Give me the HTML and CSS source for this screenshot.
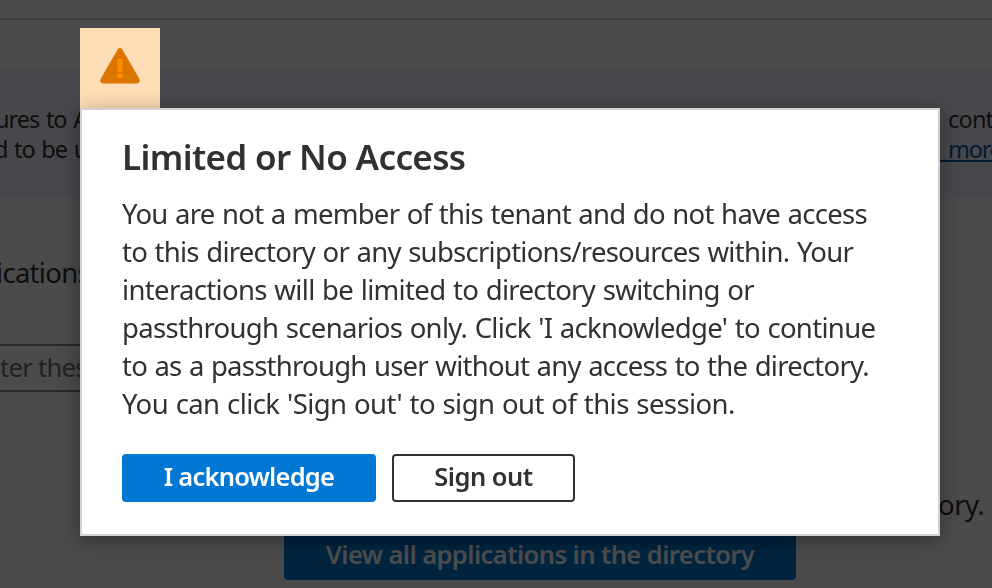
FILE: index.html
```html
<!DOCTYPE html>
<html lang="en">
<head>
  <meta charset="UTF-8" />
  <meta name="viewport" content="width=device-width, initial-scale=1.0" />
  <title>Limited or No Access</title>
  <link rel="stylesheet" href="styles.css">
</head>
<body>
  <main class="page">
    <div class="toolbar"></div>
    <section class="banner">
      <div class="banner-row"><span class="row-start">ures to A</span><span class="row-end">cont</span></div>
      <div class="banner-row"><span class="row-start need">d to be u</span><a class="row-end link">more</a></div>
    </section>
    <h2 class="section-title">ications</h2>
    <div class="search">ter thes</div>
    <p class="empty">ory.</p>
    <button class="view-all">View all applications in the directory</button>
  </main>

  <div class="overlay"></div>

  <div class="dialog-wrap">
    <div class="dialog-icon">
      <svg width="40" height="36" viewBox="0 0 40 36">
        <path d="M17.8 1.2Q20-1 22.2 1.2L39.3 30.8Q41 35.6 36.6 35.6H3.4Q-1 35.6.7 30.8Z" fill="#db7500"/>
        <path d="M17.2 11H22.8L22.2 24H17.8Z" fill="#ff8c00"/>
        <circle cx="20" cy="27.6" r="2.9" fill="#ff8c00"/>
      </svg>
    </div>
    <div class="dialog" role="dialog">
      <h1>Limited or No Access</h1>
      <p class="message">
        <span class="l1">You are not a member of this tenant and do not have access</span><br>
        <span class="l2">to this directory or any subscriptions/resources within. Your</span><br>
        <span class="l3">interactions will be limited to directory switching or</span><br>
        <span class="l4">passthrough scenarios only. Click 'I acknowledge' to continue</span><br>
        <span class="l5">to as a passthrough user without any access to the directory.</span><br>
        <span class="l6">You can click 'Sign out' to sign out of this session.</span>
      </p>
      <div class="actions">
        <button class="btn primary">I acknowledge</button>
        <button class="btn secondary">Sign out</button>
      </div>
    </div>
  </div>
</body>
</html>
```
FILE: styles.css
```css
* {
  margin: 0;
  padding: 0;
  box-sizing: border-box;
  font-family: "Noto Sans", "Open Sans", sans-serif;
}

body {
  height: 588px;
  overflow: hidden;
  background: #fafafa;
  color: #323130;
}

.page {
  height: 588px;
  overflow: hidden;
  display: flex;
  flex-direction: column;
}

.toolbar {
  height: 20px;
  border-bottom: 2px solid #cccccc;
  flex: none;
}

.banner {
  margin-top: 50px;
  height: 128px;
  padding-top: 34px;
  background: #f0f2ff;
  flex: none;
}

.banner-row {
  display: flex;
  justify-content: space-between;
  height: 30px;
  line-height: 30px;
  font-size: 23.5px;
  letter-spacing: -1px;
  word-spacing: 1.5px;
  white-space: nowrap;
}

.row-start {
  margin-left: -5px;
}

.row-start.need {
  margin-left: -6px;
}

.row-end {
  width: 44px;
  letter-spacing: -0.8px;
}

.link {
  width: 52px;
  height: 28px;
  padding-left: 8px;
  letter-spacing: -1.2px;
  color: #005ba1;
  border-bottom: 2px solid #005ba1;
}

.section-title {
  height: 38px;
  margin: 55px 0 0 -4px;
  font-size: 27.5px;
  font-weight: 400;
  letter-spacing: -0.7px;
  line-height: 39px;
}

.search {
  width: 700px;
  height: 48px;
  margin-top: 53px;
  border: 2px solid #8a8886;
  border-left: none;
  font-size: 25.5px;
  letter-spacing: -0.7px;
  line-height: 43px;
  color: #706e6c;
}

.empty {
  height: 36px;
  margin: 94px 8px 0 0;
  text-align: right;
  font-size: 27.5px;
  letter-spacing: -0.6px;
  line-height: 37px;
}

.view-all {
  width: 512px;
  height: 48px;
  margin: 10px 0 0 284px;
  padding-bottom: 4px;
  flex: none;
  border: none;
  border-radius: 4px;
  background: #0078d4;
  color: #fff;
  font-size: 25.5px;
  font-weight: 600;
  letter-spacing: -0.57px;
  white-space: nowrap;
}

.overlay {
  position: fixed;
  inset: 0;
  background: rgba(0, 0, 0, 0.7);
}

/* dialog */
.dialog-wrap {
  position: absolute;
  top: 28px;
  left: 80px;
  width: 860px;
}

.dialog-icon {
  width: 80px;
  height: 80px;
  padding: 20px;
  background: #ffddb6;
}

.dialog-icon svg {
  display: block;
}

.dialog {
  height: 428px;
  padding: 25px 40px 0;
  background: #fff;
  border: 2px solid #d2d2d2;
  box-shadow: 0 4px 20px rgba(0, 0, 0, 0.35);
}

.dialog h1 {
  height: 44px;
  font-size: 35px;
  font-weight: 600;
  letter-spacing: -0.64px;
  line-height: 44px;
  white-space: nowrap;
}

.message {
  height: 228px;
  margin-top: 16px;
  font-size: 27.5px;
  letter-spacing: -0.73px;
  word-spacing: 1px;
  line-height: 38px;
  white-space: nowrap;
}

.l3 {
  letter-spacing: -0.66px;
}

.l4 {
  letter-spacing: -0.69px;
}

.l5 {
  letter-spacing: -0.76px;
}

.l6 {
  letter-spacing: -0.58px;
}

.actions {
  display: flex;
  gap: 16px;
  margin-top: 31px;
}

.btn {
  height: 48px;
  padding-bottom: 4px;
  border: 2px solid #0078d4;
  border-radius: 4px;
  font-size: 25.5px;
  font-weight: 600;
  letter-spacing: -0.77px;
  white-space: nowrap;
}

.primary {
  width: 254px;
  background: #0078d4;
  color: #fff;
}

.secondary {
  width: 183px;
  background: #fff;
  border-color: #323130;
  color: #323130;
  letter-spacing: -0.5px;
}
```
